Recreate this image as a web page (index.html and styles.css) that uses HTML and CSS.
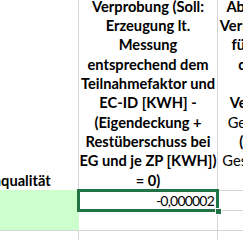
FILE: index.html
```
<!DOCTYPE html>
<html lang="de">
<head>
    <meta charset="UTF-8">
    <title>Verprobung</title>
    <link rel="stylesheet" href="styles.css">
</head>
<body>
    <div class="sheet">
        <!-- Kopfzeile -->
        <div class="cell head col-a"><span>Datenqualität</span></div>
        <div class="cell head col-b">
            <span>Verprobung (Soll:</span>
            <span>Erzeugung lt.</span>
            <span>Messung</span>
            <span>entsprechend dem</span>
            <span>Teilnahmefaktor und</span>
            <span>EC-ID [KWH] -</span>
            <span>(Eigendeckung +</span>
            <span>Restüberschuss bei</span>
            <span>EG und je ZP [KWH])</span>
            <span>= 0)</span>
        </div>
        <div class="cell head col-c">
            <span>Abweichungen (Soll:</span>
            <span>Verbrauch lt. Messung</span>
            <span>für Teilnehmer und</span>
            <span>chend dem Wert</span>
            <span>EC-ID</span>
            <span>Verbrauch [KWH] -</span>
            <span class="thin">Gesamtverbrauch lt.</span>
            <span>(Zuteilung an ZP</span>
            <span class="thin">Gesamtbezug [KWH])</span>
            <span>= 0)</span>
        </div>

        <!-- Werte -->
        <div class="cell fill"></div>
        <div class="cell num selected">-0,000002<i class="handle"></i></div>
        <div class="cell"></div>
        <div class="cell"></div>
        <div class="cell"></div>
        <div class="cell"></div>
        <div class="cell"></div>
        <div class="cell"></div>
    </div>
</body>
</html>
```

FILE: styles.css
```
body {
    margin: 0;
    background: #fff;
    overflow: hidden;
    font-family: 'Lato', 'Liberation Sans', sans-serif;
    font-size: 14.67px;
    color: #000;
}

/* Tabellenraster, Spalte A ist nach links gescrollt */
.sheet {
    display: grid;
    grid-template-columns: 145px 139px 150px;
    grid-template-rows: 191px 20px 20px 20px;
    margin-left: -66px;
}

.cell {
    border-right: 1px solid #d4d4d4;
    border-bottom: 1px solid #d4d4d4;
    overflow: hidden;
    white-space: nowrap;
}

.head {
    display: flex;
    flex-direction: column;
    justify-content: flex-end;
    align-items: center;
    font-weight: bold;
    line-height: 19.33px;
}

.head span {
    display: block;
}

.head .thin {
    font-weight: normal;
}

.col-a {
    border-bottom-color: #ccffcc;
}

.fill {
    grid-row: span 2;
    background: #ccffcc;
    border-right-color: #ccffcc;
}

.num {
    text-align: right;
    padding-right: 3px;
    font-size: 14px;
    letter-spacing: -0.8px;
    line-height: 19px;
}

.selected {
    position: relative;
    overflow: visible;
}

.selected::after {
    content: "";
    position: absolute;
    top: -2px;
    left: -2px;
    right: -2px;
    bottom: -2px;
    border: 3px solid #217346;
}

.handle {
    position: absolute;
    right: -5px;
    bottom: -5px;
    width: 5px;
    height: 5px;
    background: #217346;
    border: 1px solid #fff;
    z-index: 1;
}
```
